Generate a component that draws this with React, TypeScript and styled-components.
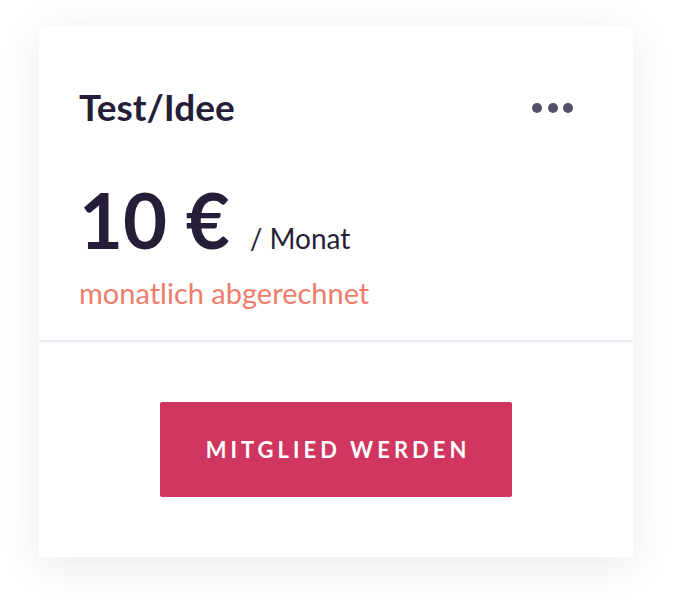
import React from "react";
import styled, { createGlobalStyle } from "styled-components";

const Global = createGlobalStyle`
  html, body { margin: 0; padding: 0; background: #ffffff; }
  body { font-family: Lato, "Noto Sans", sans-serif; }
  * { box-sizing: border-box; }
`;

const Page = styled.div`
  padding: 26px 41px 45px 39px;
`;

const Card = styled.section`
  width: 594px;
  background: #ffffff;
  box-shadow: 0 8px 40px rgba(30, 24, 50, 0.09);
  display: flex;
  flex-direction: column;
`;

const Head = styled.div`
  padding: 59px 40px 0 40px;
  height: 314px;
  display: flex;
  flex-direction: column;
`;

const TitleRow = styled.div`
  display: flex;
  align-items: flex-start;
  justify-content: space-between;
`;

const Title = styled.h2`
  margin: 0;
  font-family: Lato, sans-serif;
  font-weight: 700;
  font-size: 37px;
  line-height: 44px;
  color: #261e39;
`;

const MoreButton = styled.button`
  border: 0;
  background: transparent;
  padding: 10px 0;
  margin: 8px 20px 0 0;
  display: flex;
  gap: 5.5px;
  cursor: pointer;
`;

const Dot = styled.span`
  width: 10px;
  height: 10px;
  border-radius: 50%;
  background: #57506a;
`;

const PriceRow = styled.div`
  display: flex;
  align-items: baseline;
  margin-top: 51px;
`;

const Amount = styled.span`
  font-family: Lato, sans-serif;
  font-weight: 700;
  font-size: 76px;
  line-height: 80px;
  color: #261e39;
`;

const Period = styled.span`
  margin-left: 20px;
  font-family: Lato, sans-serif;
  font-weight: 400;
  font-size: 28px;
  color: #261e39;
`;

const Billing = styled.div`
  margin-top: 16px;
  font-family: Lato, sans-serif;
  font-weight: 400;
  font-size: 29px;
  line-height: 34px;
  color: #ee7d6b;
`;

const Divider = styled.hr`
  margin: 0;
  border: 0;
  height: 2px;
  background: #ebe9f3;
`;

const Foot = styled.div`
  padding: 60px 0;
  display: flex;
  justify-content: center;
`;

const JoinButton = styled.button`
  width: 352px;
  height: 95px;
  border: 0;
  border-radius: 2px;
  background: #d0365f;
  color: #ffffff;
  font-family: Lato, sans-serif;
  font-weight: 700;
  font-size: 22px;
  letter-spacing: 4px;
  padding: 0 0 0 4px;
  text-transform: uppercase;
  cursor: pointer;
`;

export default function App() {
  return (
    <>
      <Global />
      <Page>
        <Card>
          <Head>
            <TitleRow>
              <Title>Test/Idee</Title>
              <MoreButton aria-label="Mehr">
                <Dot />
                <Dot />
                <Dot />
              </MoreButton>
            </TitleRow>
            <PriceRow>
              <Amount>10 €</Amount>
              <Period>/ Monat</Period>
            </PriceRow>
            <Billing>monatlich abgerechnet</Billing>
          </Head>
          <Divider />
          <Foot>
            <JoinButton>Mitglied werden</JoinButton>
          </Foot>
        </Card>
      </Page>
    </>
  );
}
